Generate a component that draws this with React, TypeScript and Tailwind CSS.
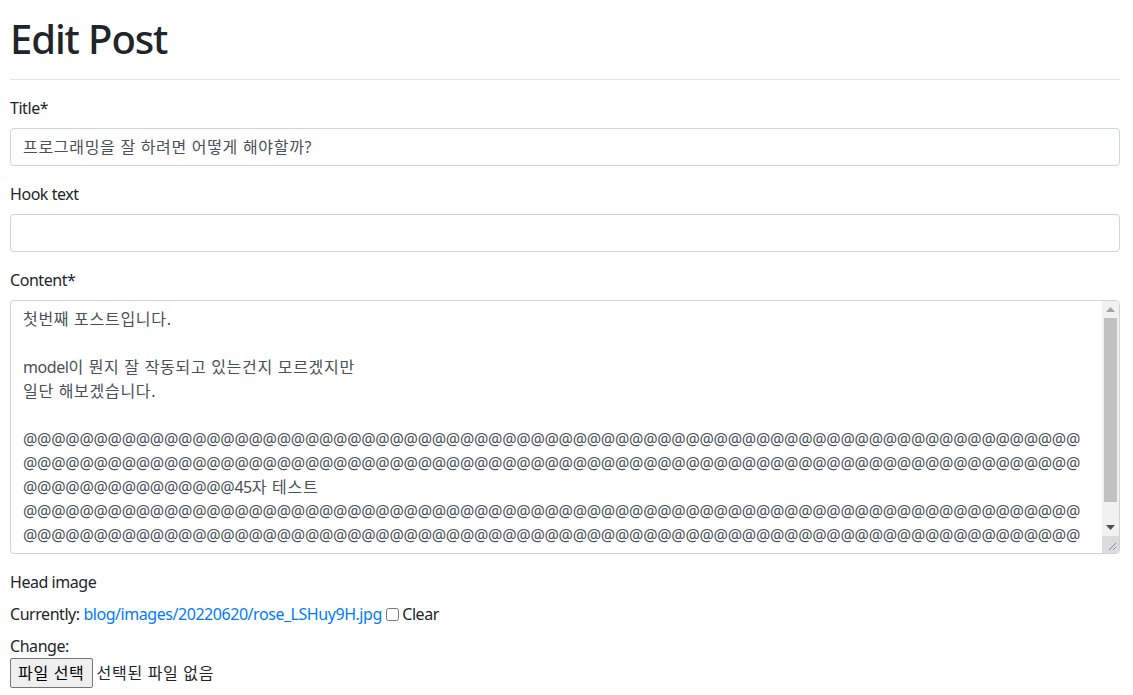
import React from "react";

function K({ children }: { children: React.ReactNode }) {
  return <span className="tracking-[0.7px]">{children}</span>;
}

function Ats({ n }: { n: number }) {
  return (
    <>
      {Array.from({ length: n }).map((_, i) => (
        <span key={i} className="inline-block w-[14.1px] text-center tracking-normal">
          @
        </span>
      ))}
    </>
  );
}

export default function App() {
  return (
    <div
      className="min-h-[695px] bg-white px-[10px] pt-[15px] text-[16px] leading-6 tracking-[-0.45px] text-[#212529]"
      style={{ fontFamily: '"Noto Sans", "Noto Sans CJK KR", sans-serif' }}
    >
      <div className="w-[1110px]">
        <h1 className="mb-2 text-[40px] font-medium leading-[48px] tracking-[-1.1px]">Edit Post</h1>
        <hr className="mt-4 mb-4 border-t border-[#e5e5e5]" />
        <form>
          <div className="mb-4">
            <label className="mb-2 block">Title*</label>
            <div className="flex h-[38px] items-center rounded-[4px] border border-[#ced4da] px-3 text-[#495057]">
              <K>프로그래밍을 잘 하려면 어떻게 해야할까?</K>
            </div>
          </div>
          <div className="mb-4">
            <label className="mb-2 block">Hook text</label>
            <div className="h-[38px] rounded-[4px] border border-[#ced4da]" />
          </div>
          <div className="mb-4">
            <label className="mb-2 block">Content*</label>
            <div className="flex h-[254px] overflow-hidden rounded-[4px] border border-[#ced4da]">
              <div className="flex-1 overflow-hidden whitespace-pre px-3 py-[6px] text-[#495057]">
                <div className="h-6">
                  <K>첫번째 포스트입니다.</K>
                </div>
                <div className="h-6" />
                <div className="h-6">
                  model<K>이 뭔지 잘 작동되고 있는건지 모르겠지만</K>
                </div>
                <div className="h-6">
                  <K>일단 해보겠습니다.</K>
                </div>
                <div className="h-6" />
                <div className="h-6">
                  <Ats n={75} />
                </div>
                <div className="h-6">
                  <Ats n={75} />
                </div>
                <div className="h-6">
                  <Ats n={15} />
                  45<K>자 테스트</K>
                </div>
                <div className="h-6">
                  <Ats n={75} />
                </div>
                <div className="h-6">
                  <Ats n={75} />
                </div>
              </div>
              <div className="flex w-[17px] flex-col bg-[#f1f1f1]">
                <div className="flex h-[17px] items-center justify-center">
                  <svg width="9" height="5" viewBox="0 0 9 5">
                    <path d="M0 5 L4.5 0 L9 5 Z" fill="#a3a3a3" />
                  </svg>
                </div>
                <div className="mx-[2px] h-[184px] bg-[#c1c1c1]" />
                <div className="flex-1" />
                <div className="flex h-[17px] items-center justify-center">
                  <svg width="9" height="5" viewBox="0 0 9 5">
                    <path d="M0 0 L9 0 L4.5 5 Z" fill="#505050" />
                  </svg>
                </div>
                <div className="flex h-[17px] items-end justify-end bg-[#dcdcdc] p-[2px]">
                  <svg width="10" height="10" viewBox="0 0 10 10">
                    <path d="M9 2 L2 9 M9 6 L6 9" stroke="#888" strokeWidth="1" />
                  </svg>
                </div>
              </div>
            </div>
          </div>
          <div>
            <label className="block">Head image</label>
            <div className="mt-2">
              Currently:{" "}
              <a className="text-[#007bff]" href="#">
                blog/images/20220620/rose_LSHuy9H.jpg
              </a>{" "}
              <input type="checkbox" className="m-0 h-[13px] w-[13px] align-[-1px]" /> Clear
            </div>
            <div className="mt-2">Change:</div>
            <div className="flex items-center">
              <span className="inline-flex h-[30px] items-center rounded-[2px] border border-[#767676] bg-[#efefef] px-[7px] text-black">
                <K>파일 선택</K>
              </span>
              <span className="ml-1">
                <K>선택된 파일 없음</K>
              </span>
            </div>
          </div>
        </form>
      </div>
    </div>
  );
}
